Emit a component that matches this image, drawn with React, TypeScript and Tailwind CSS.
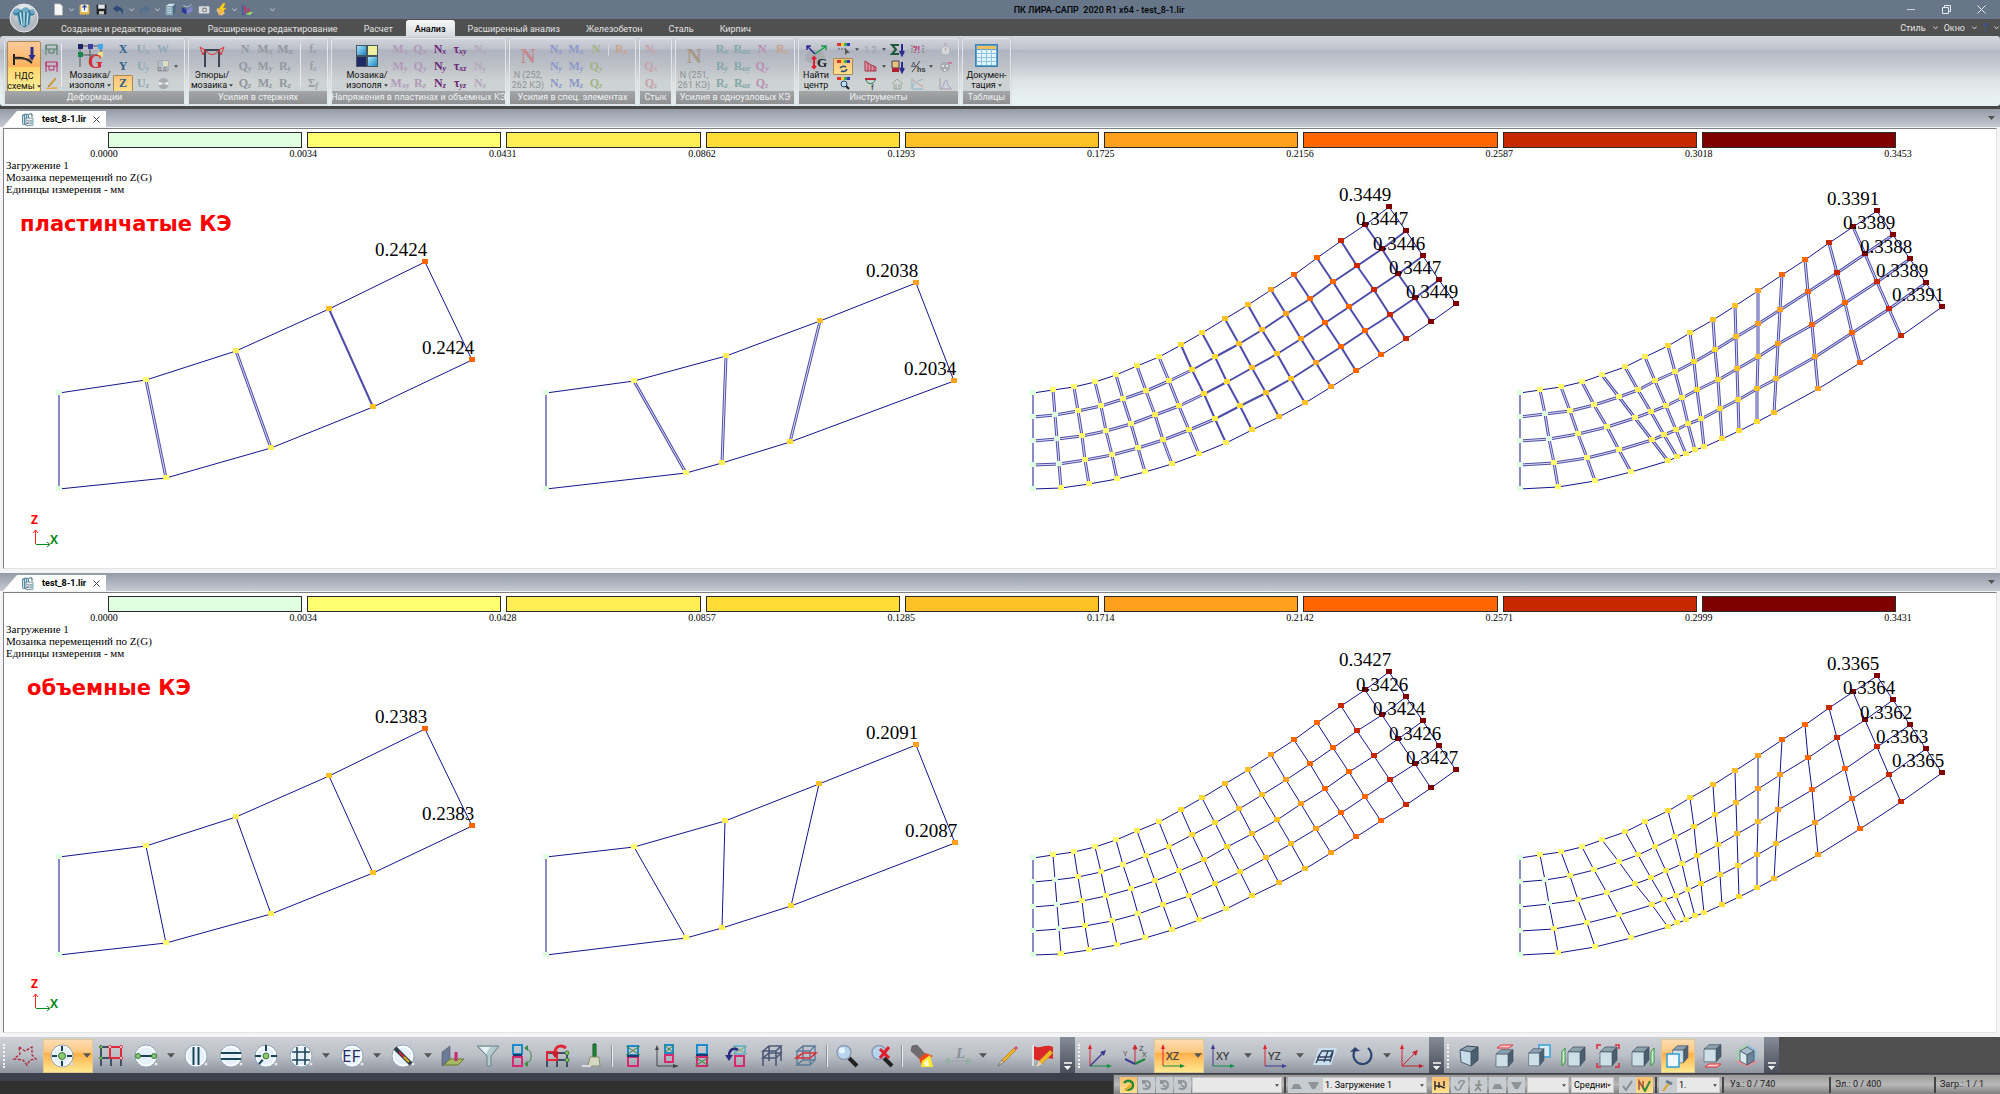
import type { ReactNode } from 'react';
import clsx from 'clsx';

const LEGEND = ['#e0ffe0', '#ffff70', '#ffee55', '#ffdc36', '#ffc028', '#ffa01e', '#ff6600', '#c82800', '#800000'];

type Point = [number, number];

interface MeshData {
	top: Point[];
	bottom: Point[];
	rows: number;
	labels: string[];
	// inner nodes that still belong to the first (almost zero) range
	still?: string[];
	// first column from which neighbouring elements close up
	closed?: number;
}

interface ViewData {
	title: string;
	titleClass: string;
	scale: string[];
	double: boolean;
	meshes: MeshData[];
}

const FINE_TOP: Point[] = [
	[1033, 393], [1053, 390], [1074, 387], [1095, 382], [1116, 375], [1137, 366], [1159, 357], [1181, 345], [1202, 333],
	[1225, 319], [1248, 305], [1271, 290], [1294, 275], [1317, 258], [1341, 241], [1365, 225], [1389, 207],
];
const FINE_BOTTOM: Point[] = [
	[1033, 489], [1061, 488], [1089, 484], [1117, 479], [1145, 472], [1172, 464], [1199, 454], [1226, 443], [1252, 430],
	[1279, 417], [1305, 403], [1331, 387], [1356, 371], [1381, 355], [1406, 339], [1431, 322], [1456, 304],
];
const SKEW_TOP: Point[] = [
	[1520, 393], [1540, 390], [1561, 387], [1582, 382], [1602, 375], [1625, 367], [1645, 357], [1668, 346], [1690, 333],
	[1713, 320], [1735, 306], [1758, 291], [1782, 275], [1805, 260], [1829, 243], [1853, 227], [1877, 211],
];
const SKEW_BOTTOM: Point[] = [
	[1520, 489], [1558, 487], [1595, 481], [1631, 472], [1668, 461], [1677, 457], [1686, 454], [1695, 450], [1704, 447],
	[1722, 439], [1739, 431], [1757, 422], [1774, 413], [1818, 389], [1860, 363], [1901, 336], [1942, 307],
];

const shift = (points: Point[], dy: number): Point[] => points.map(([x, y]) => [x, y + dy]);

const VIEWS: ViewData[] = [
	{
		title: 'пластинчатые КЭ',
		titleClass: 'left-[16px]',
		scale: ['0.0000', '0.0034', '0.0431', '0.0862', '0.1293', '0.1725', '0.2156', '0.2587', '0.3018', '0.3453'],
		double: true,
		meshes: [
			{
				top: [[59, 393], [146, 380], [236, 351], [329, 309], [425, 262]],
				bottom: [[59, 489], [166, 478], [271, 448], [373, 407], [472, 360]],
				rows: 1,
				labels: ['0.2424', '0.2424'],
				closed: 3,
			},
			{
				top: [[546, 393], [634, 381], [726, 356], [820, 321], [916, 283]],
				bottom: [[546, 489], [686, 473], [722, 463], [790, 442], [954, 381]],
				rows: 1,
				labels: ['0.2038', '0.2034'],
			},
			{
				top: FINE_TOP,
				bottom: FINE_BOTTOM,
				rows: 4,
				labels: ['0.3449', '0.3447', '0.3446', '0.3447', '0.3449'],
				still: ['1-1', '1-2', '1-3'],
				closed: 7,
			},
			{
				top: SKEW_TOP,
				bottom: SKEW_BOTTOM,
				rows: 4,
				labels: ['0.3391', '0.3389', '0.3388', '0.3389', '0.3391'],
				still: ['1-1', '1-2'],
			},
		],
	},
	{
		title: 'объемные КЭ',
		titleClass: 'left-[23px]',
		scale: ['0.0000', '0.0034', '0.0428', '0.0857', '0.1285', '0.1714', '0.2142', '0.2571', '0.2999', '0.3431'],
		double: false,
		meshes: [
			{
				top: [[59, 393], [146, 382], [236, 353], [329, 312], [425, 265]],
				bottom: [[59, 491], [166, 479], [271, 450], [373, 409], [472, 362]],
				rows: 1,
				labels: ['0.2383', '0.2383'],
			},
			{
				top: [[546, 393], [634, 383], [725, 357], [819, 320], [916, 281]],
				bottom: [[546, 491], [686, 474], [722, 464], [791, 442], [955, 379]],
				rows: 1,
				labels: ['0.2091', '0.2087'],
			},
			{
				top: shift(FINE_TOP, 1),
				bottom: shift(FINE_BOTTOM, 2),
				rows: 4,
				labels: ['0.3427', '0.3426', '0.3424', '0.3426', '0.3427'],
				still: ['1-1', '1-2', '1-3'],
			},
			{
				top: shift(SKEW_TOP, 1),
				bottom: shift(SKEW_BOTTOM, 2),
				rows: 4,
				labels: ['0.3365', '0.3364', '0.3362', '0.3363', '0.3365'],
				still: ['1-1', '1-2'],
			},
		],
	},
];

// node coordinates are counted from the window edge, the drawing area starts lower
const ORIGIN_Y = 129;
const PX_PER_MM = 537;

function nodeAt(mesh: MeshData, col: number, row: number): Point {
	const [x1, y1] = mesh.top[col];
	const [x2, y2] = mesh.bottom[col];
	const t = row / mesh.rows;
	return [Math.round(x1 + (x2 - x1) * t), Math.round(y1 + (y2 - y1) * t) - ORIGIN_Y];
}

function nodeColor(mesh: MeshData, col: number, row: number, scale: string[]) {
	if (col === 0 || mesh.still?.includes(`${col}-${row}`)) return LEGEND[0];
	const value = ((nodeAt(mesh, 0, row)[1] - nodeAt(mesh, col, row)[1]) / PX_PER_MM);
	let i = 1;
	while (i < 8 && value >= Number(scale[i + 1])) i++;
	return LEGEND[i];
}

function Mesh({ mesh, double, scale }: { mesh: MeshData; double: boolean; scale: string[] }) {
	const cols = mesh.top.length - 1;
	const lines: ReactNode[] = [];
	const nodes: ReactNode[] = [];
	const addLine = (a: Point, b: Point, inner: boolean, closed: boolean, key: string) => {
		const pos = { x1: a[0], y1: a[1], x2: b[0], y2: b[1] };
		if (inner && double) {
			lines.push(<line key={key} {...pos} stroke={closed ? '#4c4ca8' : '#5050aa'} strokeWidth={closed ? 2 : 3} />);
			if (!closed) lines.push(<line key={`${key}i`} {...pos} stroke="#dcdcf2" strokeWidth={1} />);
		} else {
			lines.push(<line key={key} {...pos} stroke="#14148e" strokeWidth={1} />);
		}
	};
	for (let c = 0; c <= cols; c++) {
		for (let r = 0; r <= mesh.rows; r++) {
			const p = nodeAt(mesh, c, r);
			const closed = mesh.closed !== undefined && c >= mesh.closed;
			if (c < cols) addLine(p, nodeAt(mesh, c + 1, r), r > 0 && r < mesh.rows, closed, `h${c}-${r}`);
			if (r < mesh.rows) addLine(p, nodeAt(mesh, c, r + 1), c > 0 && c < cols, closed, `v${c}-${r}`);
			nodes.push(<rect key={`n${c}-${r}`} x={p[0] - 3} y={p[1] - 3} width={6} height={5} fill={nodeColor(mesh, c, r, scale)} />);
		}
	}
	return (
		<g>
			<g>{lines}</g>
			<g>{nodes}</g>
			{mesh.labels.map((label, r) => {
				const [x, y] = nodeAt(mesh, cols, r);
				return (
					<text key={r} x={x - 50} y={y - 6} fontSize={19} fill="#000" fontFamily="Liberation Serif, serif">
						{label}
					</text>
				);
			})}
		</g>
	);
}

function FileIcon() {
	return (
		<svg className="w-[13px] h-[13px] shrink-0" viewBox="0 0 13 13">
			<path d="M1 2l3-1.500 4 0.500v11H2L1 10z" fill="#5f8ea3" />
			<path d="M2.500 3v8M4.500 2v9M6.500 2v3" stroke="#d6e8ef" strokeWidth="0.900" />
			<rect x="5" y="5" width="7" height="7.500" fill="#e4eef2" stroke="#3c6578" strokeWidth="0.600" />
			<text x="5.600" y="11" fontSize="5" fill="#2a4b5c" fontFamily="Noto Sans, sans-serif">20</text>
			<path d="M8 1h3v3" stroke="#3c6578" fill="none" />
		</svg>
	);
}

function Caret({ className = 'w-[7px] h-[4px] text-[#555]' }: { className?: string }) {
	return (
		<svg className={clsx('shrink-0', className)} viewBox="0 0 7 4">
			<path d="M0 0h7L3.500 4z" fill="currentColor" />
		</svg>
	);
}

const SMALL_CARET = 'w-[4px] h-[3px] text-[#444]';

function Chevron() {
	return (
		<svg className="w-[5px] h-[4px] shrink-0" viewBox="0 0 5 4">
			<path d="M0.500 0.500L2.500 3l2-2.500" stroke="#c8ccd2" fill="none" />
		</svg>
	);
}

function Viewport({ view }: { view: ViewData }) {
	return (
		<section className="flex-1 min-h-0 flex flex-col bg-[#f4f4f6]">
			<div className="h-[18px] shrink-0 flex items-end justify-between bg-linear-to-b from-[#949ca8] to-[#c6cad2]">
				<div className="h-4 flex items-center ml-[3px] w-[103px] pl-[18px] bg-white [clip-path:polygon(14px_0,100%_0,100%_100%,0_100%)]">
					<FileIcon />
					<span className="ml-[8px] w-[51px] text-[9px] leading-4 font-bold text-black whitespace-nowrap">test_8-1.lir</span>
					<button type="button" aria-label="Закрыть" className="text-[#444]">
						<svg className="w-[7px] h-[7px]" viewBox="0 0 7 7">
							<path d="M0.500 0.500l6 6M6.500 0.500l-6 6" stroke="currentColor" />
						</svg>
					</button>
				</div>
				<button type="button" aria-label="Список окон" className="h-[18px] px-[5px] flex items-center">
					<Caret />
				</button>
			</div>
			<div className="relative flex-1 min-h-0 mt-px ml-[3px] mr-[3px] mb-[4px] border-t border-l border-[#808080] border-r border-b border-r-[#e4e4e4] border-b-[#e4e4e4] bg-white overflow-hidden font-['Liberation_Serif',serif] text-black">
				<div className="flex gap-[5px] ml-[104px] mr-[100px] mt-[3px]">
					{LEGEND.map((color) => (
						<div key={color} className="flex-1 h-4 border border-[#2a2a2a]" style={{ backgroundColor: color }} />
					))}
				</div>
				<div className="flex justify-between ml-[100px] mr-[98px] h-3 text-[10px] leading-3">
					{view.scale.map((value) => (
						<span key={value} className="w-0 flex justify-center">{value}</span>
					))}
				</div>
				<div className="ml-[2px] -mt-px text-[11px] leading-3">
					<p>Загружение 1</p>
					<p>Мозаика перемещений по Z(G)</p>
					<p>Единицы измерения - мм</p>
				</div>
				<svg className="absolute -left-1 top-0 w-[2000px] h-full" aria-label="Деформированная схема">
					{view.meshes.map((mesh, i) => (
						<Mesh key={i} mesh={mesh} double={view.double} scale={view.scale} />
					))}
					<g fontFamily="Open Sans, sans-serif" fontSize="12" fontWeight="700">
						<text x="31" y="395" fill="#f00">Z</text>
						<text x="50" y="415" fill="#0a8a1a">X</text>
					</g>
					<path d="M35.500 415v-14M33 404l2.500-3 2.500 3" stroke="#f22" fill="none" />
					<path d="M36 415.500h14M47 413l3 2.500-3 2.500" stroke="#0a8a1a" fill="none" />
				</svg>
				<h2 className={clsx("absolute top-[83px] font-['DejaVu_Sans',sans-serif] font-bold text-[21px] leading-6 text-[#f00]", view.titleClass)}>
					{view.title}
				</h2>
			</div>
		</section>
	);
}

/* ---------- ribbon ---------- */

// "Nx" means the letter N with index x
function Letters({ items, color }: { items: string[]; color: string }) {
	return (
		<div className={clsx('flex flex-col w-5 shrink-0', color)}>
			{items.map((item, i) => (
				<button key={i} type="button" className="h-[17px] flex items-center justify-center font-['Liberation_Serif',serif] font-bold text-[12px] leading-[17px]">
					{item[0]}
					{item.length > 1 && <i className="text-[8px] leading-[12px] pt-[5px]">{item.slice(1)}</i>}
				</button>
			))}
		</div>
	);
}

function Group({ title, width, children }: { title: string; width: string; children: ReactNode }) {
	return (
		<div className={clsx('h-[67px] shrink-0 flex flex-col rounded-[2px] border border-[#e4e7ea] shadow-[0_0_1px_#888]', width)}>
			<div className="flex-1 min-h-0 flex pt-[2px] bg-linear-to-b from-black/0 to-black/10">{children}</div>
			<div className="h-[13px] bg-linear-to-b from-[#a4a6a8] to-[#8e9092] text-[#f0f2f4] text-[9px] leading-[13px] flex justify-center whitespace-nowrap">
				{title}
			</div>
		</div>
	);
}

function BigButton({ icon, lines, className, arrow = true }: { icon: ReactNode; lines: string[]; className: string; arrow?: boolean }) {
	return (
		<button type="button" className={clsx('h-[51px] shrink-0 flex flex-col items-center text-[9px] leading-[10px] whitespace-nowrap', className)}>
			<span className="h-[29px] flex items-center">{icon}</span>
			<span>{lines[0]}</span>
			<span className="flex items-center gap-[2px]">
				{lines[1]}
				{arrow && <Caret className={SMALL_CARET} />}
			</span>
		</button>
	);
}

function IconColumn({ children }: { children: ReactNode[] }) {
	return (
		<div className="flex flex-col shrink-0 w-5">
			{children.map((icon, i) => (
				<button key={i} type="button" className="h-[17px] flex items-center justify-center">
					{icon}
				</button>
			))}
		</div>
	);
}

function Small({ children, active = false }: { children: ReactNode; active?: boolean }) {
	return (
		<span className={clsx('flex items-center justify-center w-5 h-[17px]', active && 'bg-linear-to-b from-[#fbc27c] to-[#ffe08a] border border-[#a98a52] rounded-[1px]')}>
			<svg className="w-[13px] h-[13px] overflow-visible" viewBox="0 0 13 13" fill="none">
				{children}
			</svg>
		</span>
	);
}

function Divider() {
	return <div className="w-px h-[44px] mt-[2px] bg-[#c0c3c8] border-r border-[#e8eaee] shrink-0" />;
}

const rainbow = (
	<>
		<rect x="0" y="0" width="4" height="3" fill="#d33" />
		<rect x="4" y="0" width="3" height="3" fill="#fc3" />
		<rect x="7" y="0" width="3" height="3" fill="#3a5" />
		<rect x="10" y="0" width="3" height="3" fill="#33b" />
	</>
);

function Ribbon() {
	return (
		<div className="h-[70px] shrink-0 flex gap-[3px] pl-1 pt-[2px] rounded-[3px] bg-[linear-gradient(#d4d7de_0,#c0c4ce_19%,#b2b7c3_20%,#c6cad2_42%,#dfe4e4_64%,#e8f1f2_90%)]">
			<Group title="Деформации" width="w-[181px]">
				<BigButton
					className="w-[34px] ml-[2px] border border-[#a98a52] rounded-[2px] bg-[linear-gradient(#fbc99a_0,#fdb45c_50%,#ffd66c_52%,#fff09a_100%)]"
					lines={['НДС', 'схемы']}
					icon={
						<svg className="w-[26px] h-[24px]" viewBox="0 0 26 24" fill="none">
							<path d="M3 9v11" stroke="#222" strokeWidth="2" />
							<path d="M3 13c8-1 13 0 18 5" stroke="#222" strokeWidth="2" />
							<path d="M3 14h19" stroke="#444" strokeWidth="0.800" />
							<path d="M21 2v10" stroke="#2c2c90" strokeWidth="3" />
							<path d="M17.500 10h7L21 16z" fill="#2c2c90" />
						</svg>
					}
				/>
				<IconColumn>
					<Small><path d="M1 2h11v4H1zM1 2v10M12 2v10M4 6v4h5V6" stroke="#4f7f62" /></Small>
					<Small><path d="M1 2h11v4H1zM1 2v10M12 2v10M4 6v4h5V6" stroke="#c0286c" /></Small>
					<Small><path d="M10 1L4 8l-1 2 2-1 6-7z" fill="#f4b02c" stroke="#8a6a20" strokeWidth="0.500" /><path d="M1 11l11-1v2H1z" fill="#e8a84c" /></Small>
				</IconColumn>
				<Divider />
				<BigButton
					className="w-[46px] ml-[5px]"
					lines={['Мозаика/', 'изополя']}
					icon={
						<svg className="w-[27px] h-[26px] overflow-visible" viewBox="0 0 27 26" fill="none">
							<path d="M3 3h21v9H3zM13 3v9M3 12v12M13 12v10" stroke="#555" />
							<rect x="1" y="1" width="5" height="5" fill="#1f2468" />
							<rect x="11" y="1" width="5" height="5" fill="#3a3fa0" />
							<rect x="21" y="1" width="5" height="5" fill="#3fa8e8" />
							<rect x="1" y="9" width="5" height="5" fill="#1a8a4a" />
							<rect x="21" y="9" width="5" height="5" fill="#e8e48a" />
							<text x="11" y="25" fontSize="19" fontWeight="700" fill="#d82830" fontFamily="Liberation Serif, serif">G</text>
						</svg>
					}
				/>
				<div className="flex flex-col w-[20px] shrink-0 font-['Liberation_Serif',serif] font-bold text-[12px] leading-[17px] text-[#2f6288]">
					<button type="button" className="h-[17px]">X</button>
					<button type="button" className="h-[17px]">Y</button>
					<button type="button" className="h-[17px] leading-[15px] rounded-[1px] border border-[#a98a52] bg-linear-to-b from-[#fbc27c] to-[#ffe08a]">Z</button>
				</div>
				<Letters items={['Ux', 'Uy', 'Uz']} color="text-[#8fa9b8]" />
				<IconColumn>
					<span className="font-['Liberation_Serif',serif] font-bold text-[12px] leading-[17px] text-[#8fa9b8]">W</span>
					<Small><path d="M1 1h10v10H1z" stroke="#999" /><path d="M1 1h5v5H1z" fill="#aebbc8" /><path d="M6 1h5v5H6z" fill="#dcdcc0" /><text x="1" y="11" fontSize="6" fill="#667" fontFamily="Roboto, sans-serif">0.0</text></Small>
					<Small><circle cx="6.500" cy="6.500" r="5.500" fill="#a8acb0" /><path d="M6.500 6.500l5-2v4zM6.500 6.500l-5-2v4z" fill="#eee" /></Small>
				</IconColumn>
				<span className="pt-[24px] pl-px"><Caret className={SMALL_CARET} /></span>
			</Group>
			<Group title="Усилия в стержнях" width="w-[140px]">
				<BigButton
					className="w-[46px]"
					lines={['Эпюры/', 'мозаика']}
					icon={
						<svg className="w-[26px] h-[24px]" viewBox="0 0 26 24" fill="none">
							<path d="M6 23V6h14v17" stroke="#3c4652" strokeWidth="2" />
							<path d="M1 3l5 3c5 6 10 6 14 0l5-3-3 8-2-5M1 3l3 8 2-5" stroke="#e03030" />
						</svg>
					}
				/>
				<Letters items={['N', 'Qy', 'Qz']} color="text-[#9298a0]" />
				<Letters items={['Mx', 'My', 'Mz']} color="text-[#9298a0]" />
				<Letters items={['Mк', 'Ry', 'Rz']} color="text-[#9298a0]" />
				<span className="w-[5px]" />
				<Divider />
				<span className="w-[2px]" />
				<Letters items={['fy', 'fz', 'Σf']} color="text-[#9ca0a6]" />
			</Group>
			<Group title="Напряжения в пластинах и объемных КЭ" width="w-[175px]">
				<BigButton
					className="w-[56px] pl-[14px]"
					lines={['Мозаика/', 'изополя']}
					icon={
						<svg className="w-[22px] h-[22px]" viewBox="0 0 22 22">
							<defs>
								<linearGradient id="iso" x2="1" y2="1">
									<stop stopColor="#a8e4fa" />
									<stop offset="1" stopColor="#1c86c4" />
								</linearGradient>
							</defs>
							<rect width="22" height="22" fill="#46555e" />
							<rect x="1" y="1" width="9" height="9" fill="url(#iso)" />
							<rect x="12" y="1" width="9" height="9" fill="#f0f0a0" />
							<rect x="1" y="12" width="9" height="9" fill="#1e2a68" />
							<rect x="12" y="12" width="9" height="9" fill="url(#iso)" />
						</svg>
					}
				/>
				<span className="w-[2px]" />
				<Letters items={['Mx', 'My', 'Mxy']} color="text-[#b09ab8]" />
				<Letters items={['Qx', 'Qy', 'Rz']} color="text-[#b09ab8]" />
				<Letters items={['Nx', 'Ny', 'Nz']} color="text-[#6a2a78]" />
				<Letters items={['τxy', 'τxz', 'τyz']} color="text-[#6a2a78]" />
				<Letters items={['Nx', 'Ny', 'Nz']} color="text-[#b4a8bc]" />
			</Group>
			<Group title="Усилия в спец. элементах" width="w-[127px]">
				<div className="text-[#8e9296]"><BigButton className="w-[36px]" arrow={false} lines={['N (252,', '262 КЭ)']} icon={<b className="font-['Liberation_Serif',serif] text-[21px] text-[#c48a90]">N</b>} /></div>
				<Letters items={['Nx', 'Ny', 'Nz']} color="text-[#8c98c8]" />
				<Letters items={['Mx', 'My', 'Mz']} color="text-[#8c98c8]" />
				<Letters items={['N', 'Qy', 'Qz']} color="text-[#a0b484]" />
				<span className="w-[2px]" />
				<div className="w-px h-3 mt-[3px] bg-[#d8dade]" />
				<span className="w-[2px]" />
				<Letters items={['Rz']} color="text-[#c8a48c]" />
			</Group>
			<Group title="Стык" width="w-[33px]">
				<span className="w-px" />
				<Letters items={['Ny', 'Qx', 'Qz']} color="text-[#c4a4a8]" />
			</Group>
			<Group title="Усилия в одноузловых КЭ" width="w-[120px]">
				<div className="text-[#8e9296]"><BigButton className="w-[36px]" arrow={false} lines={['N (251,', '261 КЭ)']} icon={<b className="font-['Liberation_Serif',serif] text-[21px] text-[#a89888]">N</b>} /></div>
				<Letters items={['Rx', 'Ry', 'Rz']} color="text-[#84a8a8]" />
				<Letters items={['Rux', 'Ruy', 'Ruz']} color="text-[#84a8a8]" />
				<Letters items={['N', 'Qy', 'Qz']} color="text-[#b890b4]" />
				<Letters items={['Rz']} color="text-[#c8a48c]" />
			</Group>
			<Group title="Инструменты" width="w-[161px]">
				<BigButton
					className="w-[34px]"
					arrow={false}
					lines={['Найти', 'центр']}
					icon={
						<svg className="w-[24px] h-[26px] overflow-visible" viewBox="0 0 24 26" fill="none">
							<ellipse cx="11" cy="14" rx="10" ry="7" fill="#a8aeb4" />
							<path d="M11 11L3 3M3 7V3h4" stroke="#2c2c90" strokeWidth="1.500" />
							<path d="M11 11l10-7M17 3h5v4" stroke="#1a9a4a" strokeWidth="1.500" />
							<path d="M10 14v11M8 16l2-2 2 2M8 23l2 2 2-2" stroke="#e02030" strokeWidth="2" />
							<text x="13" y="24" fontSize="13" fontWeight="700" fill="#222" fontFamily="Liberation Serif, serif">G</text>
						</svg>
					}
				/>
				<IconColumn>
					<Small>{rainbow}<path d="M1 6h9" stroke="#555" strokeDasharray="2 1" /><path d="M8 5v7l2-2h3z" fill="#555" /></Small>
					<Small active>{rainbow}<path d="M3 8a4 3 0 0 1 6-1M10 9a4 3 0 0 1-6 2" stroke="#274b78" strokeWidth="1.500" /></Small>
					<Small>{rainbow}<circle cx="7" cy="7" r="3" fill="#bfe0f4" stroke="#246" /><path d="M9 9l3 3" stroke="#222" strokeWidth="2" /></Small>
				</IconColumn>
				<span className="w-[7px] pt-[7px] pl-[2px]"><Caret className={SMALL_CARET} /></span>
				<IconColumn>
					<Small><text x="0" y="10" fontSize="9" fill="#999ea6" fontFamily="Roboto, sans-serif">1.2</text></Small>
					<Small><path d="M1 1v10h11V7L7 5z" fill="#d89aa8" stroke="#b03048" /><path d="M4 3v8M7 5v6M10 6v5" stroke="#b03048" /></Small>
					<Small><path d="M1 1h11v2H1z" fill="#c02838" /><path d="M2 3c2 5 7 5 9 0" stroke="#1a7a4a" /><text x="7" y="13" fontSize="8" fill="#222">f</text></Small>
				</IconColumn>
				<span className="w-[7px] pt-[7px] pl-[2px] flex flex-col gap-[14px]"><Caret className={SMALL_CARET} /><Caret className={SMALL_CARET} /></span>
				<IconColumn>
					<Small><path d="M8 2H1l4 4.500L1 11h7" stroke="#1c5a38" strokeWidth="2" /><path d="M11 1v9M9 8l2 4 2-4" stroke="#2c2c90" strokeWidth="2" /></Small>
					<Small><path d="M1 1h7v7H1z" fill="#e8c080" stroke="#444" /><path d="M1 8h7v4H1z" fill="#b02030" /><path d="M11 2v8M9 8l2 4 2-4" stroke="#2c2c90" strokeWidth="2" /></Small>
					<Small><path d="M1 7l5-5 6 5M3 7v5h7V7M5 7v5M8 7v5" stroke="#9aa89a" /></Small>
				</IconColumn>
				<IconColumn>
					<Small><text x="2" y="10" fontSize="9" fontWeight="700" fill="#c03070" fontFamily="Roboto, sans-serif">?!</text><path d="M1 2v9M12 2v9" stroke="#777" strokeDasharray="2 1" /></Small>
					<Small><text x="0" y="7" fontSize="7" fill="#333">Δ</text><path d="M1 12L9 1" stroke="#444" /><text x="6" y="12" fontSize="8" fontWeight="700" fill="#444">hs</text></Small>
					<Small><path d="M1 1v11h11M1 11C4 4 8 4 12 2" stroke="#8ab4c4" /><path d="M2 3l10 7" stroke="#d09aa4" /></Small>
				</IconColumn>
				<span className="w-[8px] pt-[24px] pl-[2px]"><Caret className={SMALL_CARET} /></span>
				<IconColumn>
					<Small><circle cx="6.500" cy="7.500" r="4.500" fill="#d4d6d8" stroke="#aeb2b6" /><path d="M5 1h3M6.500 7.500V5" stroke="#c09aa0" /></Small>
					<Small><circle cx="6" cy="7" r="5" fill="#a8acb0" /><circle cx="4" cy="6" r="1" fill="#eee" /><circle cx="8" cy="6" r="1" fill="#eee" /><circle cx="6" cy="10" r="1" fill="#eee" /><path d="M9 3h4" stroke="#d07aa0" strokeWidth="2" /></Small>
					<Small><path d="M1 1v11h12" stroke="#b09ab0" /><path d="M2 11C5 11 5 3 7 3s1 8 5 8" stroke="#9aa4c8" /></Small>
				</IconColumn>
			</Group>
			<Group title="Таблицы" width="w-[49px]">
				<BigButton
					className="w-[47px]"
					lines={['Докумен-', 'тация']}
					icon={
						<svg className="w-[23px] h-[23px]" viewBox="0 0 23 23">
							<rect x="0.500" y="0.500" width="22" height="22" fill="#5ba0cc" stroke="#3d82b0" />
							<rect x="2" y="2" width="19" height="3" fill="#f0c060" />
							<rect x="2" y="6" width="19" height="15" fill="#e4f4fc" />
							<path d="M2 9.500h19M2 13.500h19M2 17.500h19M6.500 5v16M11.500 5v16M16.500 5v16" stroke="#8cc4e4" fill="none" />
						</svg>
					}
				/>
			</Group>
		</div>
	);
}

/* ---------- title bar and menu ---------- */

const QUICK: { name: string; icon: ReactNode; more?: boolean }[] = [
	{ name: 'Новый', more: true, icon: <path d="M3 1h7l3 3v11H3z" fill="#f6f6f6" stroke="#999" strokeWidth="0.500" /> },
	{ name: 'Открыть', icon: <><rect x="2" y="2" width="12" height="12" rx="1" fill="#e8b64c" /><rect x="4" y="2" width="8" height="9" fill="#f4f7fb" /><path d="M8 3v6M5.500 5.500L8 3l2.500 2.500" stroke="#2a4a90" strokeWidth="1.500" /></> },
	{ name: 'Сохранить', icon: <><path d="M2 2h12v12H2z" fill="#222" /><path d="M4 2h8v5H4z" fill="#e4e8ee" /><path d="M5 10h6v4H5z" fill="#ccc" /></> },
	{ name: 'Отменить', more: true, icon: <path d="M1 7l6-5v3c5 0 8 3 6 9-1-4-3-5-6-5v3z" fill="#2c4a78" /> },
	{ name: 'Повторить', more: true, icon: <path d="M15 7L9 2v3C4 5 1 8 3 14c1-4 3-5 6-5v3z" fill="#54708c" /> },
	{ name: 'Визуализация', icon: <><path d="M2 4l4-3h8l-3 3z" fill="#cfe0e8" /><path d="M2 4h9v11H2z" fill="#88a8b8" /><path d="M11 4l3-3v11l-3 3z" fill="#4a6a80" /><path d="M4 6h5M4 9h5M4 12h5" stroke="#d8e8f0" /></> },
	{ name: 'Книга отчетов', icon: <><path d="M1 5l6 3v6l-6-3z" fill="#2c3c90" /><path d="M7 8l7-4v6l-7 4z" fill="#7c84cc" /><path d="M3 3l5 2 5-3" stroke="#c8d0f0" /></> },
	{ name: 'Снимок', icon: <><rect x="1" y="4" width="13" height="9" rx="1" fill="#d8dadc" /><circle cx="8" cy="8.500" r="3" fill="#777" /><circle cx="8" cy="8.500" r="1.500" fill="#eee" /></> },
	{ name: 'Расчет', more: true, icon: <><path d="M3 6l7 2 2 5-3 2H5L2 9z" fill="#f0c080" /><path d="M10 0L4 8h4l-3 7 9-9h-4l3-6z" fill="#ffd21c" stroke="#c88a10" strokeWidth="0.500" /></> },
	{ name: 'Эпюры', icon: <><path d="M2 2v12h13" stroke="#4c5c9c" strokeWidth="2" /><path d="M5 4v8M9 6v6" stroke="#c83060" strokeWidth="2" /><path d="M5 14l5-3h5l-3 4z" fill="#9ac860" /></> },
];

function TitleBar() {
	return (
		<header className="h-[19px] shrink-0 bg-[#677689] flex items-center pl-[50px] pr-[12px]">
			<div className="flex items-center flex-1">
				{QUICK.map((item) => (
					<div key={item.name} className="flex items-center">
						<button type="button" aria-label={item.name} className="w-[17px] flex justify-center">
							<svg className="w-[13px] h-[13px]" viewBox="0 0 16 16" fill="none">{item.icon}</svg>
						</button>
						{item.more && <span className="w-[9px] flex justify-center"><Chevron /></span>}
					</div>
				))}
				<span className="ml-[14px]"><Chevron /></span>
			</div>
			<h1 className="text-[9px] leading-[18px] text-black font-medium whitespace-pre pl-[160px]">ПК ЛИРА-САПР  2020 R1 x64 - test_8-1.lir</h1>
			<div className="flex-1 flex justify-end gap-[21px]">
				<button type="button" aria-label="Свернуть" className="w-[14px] h-[14px] flex items-center justify-center">
					<span className="w-2 h-px bg-[#cdd3da]" />
				</button>
				<button type="button" aria-label="Восстановить" className="w-[14px] h-[14px] flex items-center justify-center">
					<svg className="w-[9px] h-[9px]" viewBox="0 0 9 9" fill="none" stroke="#e6e9ed"><path d="M0.500 2.500h6v6h-6zM2.500 2V0.500h6v6H7" /></svg>
				</button>
				<button type="button" aria-label="Закрыть" className="w-[14px] h-[14px] flex items-center justify-center">
					<svg className="w-[9px] h-[9px]" viewBox="0 0 9 9" fill="none" stroke="#e6e9ed"><path d="M0.500 0.500l8 8M8.500 0.500l-8 8" /></svg>
				</button>
			</div>
		</header>
	);
}

const TABS = ['Создание и редактирование', 'Расширенное редактирование', 'Расчет', 'Анализ', 'Расширенный анализ', 'Железобетон', 'Сталь', 'Кирпич'];

function MenuBar() {
	return (
		<nav className="h-[17px] shrink-0 bg-[#505050] flex items-end pl-[48px] pr-px text-[#e2e2e2] text-[9px] leading-[18px]">
			{TABS.map((tab) => (
				<button
					key={tab}
					type="button"
					className={clsx(
						'h-4 whitespace-nowrap',
						tab === 'Анализ' ? 'px-[9px] rounded-t-[3px] bg-linear-to-b from-[#f6f7f9] to-[#d6dae0] text-black font-medium' : 'px-[13px]'
					)}
				>
					{tab}
				</button>
			))}
			<div className="ml-auto h-[17px] flex items-center gap-[6px]">
				<button type="button" className="flex items-center gap-[7px]">Стиль <Chevron /></button>
				<button type="button" className="flex items-center gap-[7px]">Окно <Chevron /></button>
				<button type="button" className="flex items-center gap-[5px]">
					<b className="text-[12px] text-[#3c5488]">?</b> <Chevron />
				</button>
			</div>
		</nav>
	);
}

function Orb() {
	return (
		<button type="button" aria-label="Меню приложения" className="absolute left-[9px] top-[3px]">
			<svg className="w-[30px] h-[30px]" viewBox="0 0 30 30" fill="none">
				<defs>
					<radialGradient id="orb" cy="0.250">
						<stop stopColor="#fff" />
						<stop offset="1" stopColor="#b4b9c0" />
					</radialGradient>
				</defs>
				<circle cx="15" cy="15" r="14" fill="url(#orb)" stroke="#e4e8ec" />
				<path d="M4 8c3-4 6-3 8-1 3-4 7-3 9 0 3-2 5 0 5 3-1 3-3 3-4 3l-1 8-5 4-6-4-2-8c-3 0-5-2-4-5z" fill="#6fa8c2" />
				<path d="M9 9l3 13M13 8l2 16M17 9l-1 15M21 9l-2 13M5 10c3 3 6-1 7-3M25 11c-3 2-5-1-5-4" stroke="#2f7490" strokeWidth="1.300" />
				<path d="M11 9l2 13M15 9v14M19 10l-1 12" stroke="#d4ecf4" />
			</svg>
		</button>
	);
}

/* ---------- bottom toolbars ---------- */

interface Tool {
	name: string;
	icon?: ReactNode;
	more?: boolean;
	active?: boolean;
	sep?: boolean;
}

const lens = (
	<>
		<circle cx="12" cy="12" r="11" fill="#e6f0f8" stroke="#8fa4b8" />
		<circle cx="12" cy="12" r="9.500" stroke="#fff" strokeWidth="1.500" />
		<circle cx="22" cy="20" r="1.500" fill="#f4f4f4" stroke="#aaa" strokeWidth="0.500" />
	</>
);
const GreenDot = ({ x, y, r = 2 }: { x: number; y: number; r?: number }) => <circle cx={x} cy={y} r={r} fill="#8cc870" stroke="#3c7838" />;

const frame = (y: number, h: number, color: string) => <rect x="7" y={y} width="10" height={h} stroke={color} strokeWidth="2" />;
const crossed = (y: number, color: string) => (
	<>
		{frame(y, 9, color)}
		<path d={`M5 ${y}l14 9M19 ${y}L5 ${y + 9}`} stroke="#3a8a3a" />
	</>
);

const TOOLS_SELECT: Tool[] = [
	{ name: 'Полигон', icon: <path d="M6 3l6 4 7-4v8l4 4-6 1-3 5-4-5-9-1 6-5z" stroke="#b02838" strokeWidth="1.300" strokeDasharray="3 1.500" /> },
	{ name: 'Отметка узлов', more: true, active: true, icon: <>{lens}<path d="M12 2v20M2 12h20" stroke="#1c4458" strokeWidth="2" /><circle cx="12" cy="12" r="5" fill="#f4f8fc" /><GreenDot x={12} y={12} r={3.5} /></> },
	{ name: 'Отметка блоков', icon: <><path d="M2 2v20M2 3h9M2 14h20M12 14v8M22 14v8" stroke="#3c5068" strokeWidth="2" /><path d="M11 3h11v11H11z" stroke="#e02838" strokeWidth="2" /><GreenDot x={2} y={3} r={1.5} /><GreenDot x={2} y={14} r={1.5} /><circle cx="11" cy="3" r="1.500" fill="#fff" stroke="#e02838" /><circle cx="22" cy="3" r="1.500" fill="#fff" stroke="#e02838" /><circle cx="22" cy="14" r="1.500" fill="#fff" stroke="#e02838" /></> },
	{ name: 'Отметка элементов', more: true, icon: <>{lens}<path d="M4 12h16" stroke="#1c4458" strokeWidth="2" /><GreenDot x={4} y={12} r={2.5} /><GreenDot x={20} y={12} r={2.5} /></> },
	{ name: 'Вертикальные', icon: <>{lens}<path d="M9.500 3v18M14.500 3v18" stroke="#1c4458" strokeWidth="2" /></> },
	{ name: 'Горизонтальные', icon: <>{lens}<path d="M2 9h20M2 15h20" stroke="#1c4458" strokeWidth="2" /></> },
	{ name: 'Узел', icon: <>{lens}<path d="M12 1v11M1 12h22M12 12l-7 8" stroke="#1c4458" strokeWidth="2" /><circle cx="12" cy="12" r="5" fill="#f4f8fc" /><GreenDot x={12} y={12} r={3} /></> },
	{ name: 'Сетка', more: true, icon: <>{lens}<path d="M8 3v18M16 3v18M3 8h18M3 16h18" stroke="#1c4458" strokeWidth="1.600" /></> },
	{ name: 'Жесткость', more: true, icon: <>{lens}<text x="2" y="18" fontSize="17" fill="#28285c" fontFamily="Open Sans, sans-serif">EF</text></> },
	{ name: 'Фильтр цвета', more: true, icon: <>{lens}<path d="M4 4l16 16" stroke="#2c3c48" strokeWidth="4" /><path d="M12 12l6 6" stroke="#d8b020" strokeWidth="2" /><path d="M8 8l5 5" stroke="#c82838" strokeWidth="2" /></> },
	{ name: 'Профиль', icon: <><path d="M1 8l8-6v14l-8 6z" fill="#6c7c98" stroke="#445" strokeWidth="0.500" /><path d="M3 21h14l6-6H9z" fill="#a8b860" stroke="#687830" /><path d="M15 8v9" stroke="#c8286c" strokeWidth="3" /></> },
	{ name: 'Фильтр', icon: <><path d="M1 2h22l-8 10v10h-4V12z" fill="#b4ccd0" stroke="#6c8088" /><path d="M4 3h10l-4 7z" fill="#e8f4f4" /></> },
	{ name: 'Инверсия', icon: <><path d="M3 1h9v9H3z" stroke="#1c8ccc" strokeWidth="2" /><path d="M3 11h9" stroke="#1c3c70" strokeWidth="2" /><path d="M3 13h9v9H3z" stroke="#d82870" strokeWidth="2" /><path d="M16 4c7 3 7 13 0 16" stroke="#3a8a4a" /><path d="M14 4l4-3v6zM14 20l4-3v6z" fill="#3a8a4a" /></> },
	{ name: 'Отмена отметки', icon: <><path d="M2 9h20v7H2zM2 16v7M12 9v14M22 16v7" stroke="#3c5068" strokeWidth="2" /><path d="M2 8h10v8H2z" stroke="#e02838" strokeWidth="2" /><path d="M21 4c-5-4-11-2-11 5" stroke="#e02838" strokeWidth="3" /><path d="M6 8h9l-5 6z" fill="#c02030" /><GreenDot x={22} y={9} r={2} /><GreenDot x={22} y={16} r={2} /></> },
	{ name: 'Очистить', icon: <><path d="M13 0h3v13h-3z" fill="#1f8a38" stroke="#0f5a20" /><path d="M10 13h9l1 9H8z" fill="#d4d8c0" stroke="#889070" /><path d="M2 22h9" stroke="#ddd" strokeWidth="2" /></> },
	{ name: 's1', sep: true },
	{ name: 'Фрагмент', icon: <>{crossed(2, '#1c8ccc')}{frame(13, 9, '#d82870')}<path d="M6 12h12" stroke="#1c3c70" strokeWidth="2" /></> },
	{ name: 'Фрагмент по осям', icon: <><path d="M2 22V4M2 22h17" stroke="#444" /><path d="M0 6l2-5 2 5zM18 20l6 2-6 2z" fill="#444" /><path d="M10 1h8v8h-8z" stroke="#1c8ccc" strokeWidth="2" /><path d="M9 1l10 8M19 1L9 9" stroke="#3a8a3a" /><path d="M10 11h8v7h-8z" stroke="#d82870" strokeWidth="2" /></> },
	{ name: 'Нижний фрагмент', icon: <>{frame(1, 9, '#1c8ccc')}{crossed(13, '#d82870')}<path d="M6 11h12" stroke="#1c3c70" strokeWidth="2" /></> },
	{ name: 'Восстановить', icon: <><path d="M10 2h10v8H10z" stroke="#70b8d0" strokeWidth="2" /><path d="M8 2l14 8M22 2L8 10" stroke="#78a878" /><path d="M10 12h9v10h-9z" stroke="#d82870" strokeWidth="2" /><path d="M13 6C8 3 4 6 4 12" stroke="#2c2c80" strokeWidth="2.500" /><path d="M0 11h8l-4 6z" fill="#2c2c80" /></> },
	{ name: 'Каркас', icon: <path d="M3 7l6-5h12l-5 5zM3 7v15M16 7v15M21 2v15M9 2v15M3 14h13l5-5H9z" stroke="#4c5a78" strokeWidth="1.600" /> },
	{ name: 'Перекрытие', icon: <><path d="M3 7l6-5h12l-5 5zM3 21h13l5-5H9zM3 7v14M16 7v14M21 2v14M9 2v14" stroke="#5c7c98" strokeWidth="1.400" /><path d="M2 14h14l6-5H9z" stroke="#d83038" strokeWidth="1.600" /></> },
	{ name: 's2', sep: true },
	{ name: 'Масштаб', icon: <><path d="M14 14l8 8" stroke="#222" strokeWidth="4" /><circle cx="9" cy="8.500" r="7" fill="#b8d4ee" stroke="#8c9cb0" strokeWidth="1.500" /><circle cx="7" cy="6.500" r="3" fill="#e8f4fc" /></> },
	{ name: 'Сброс масштаба', icon: <><path d="M14 14l8 8" stroke="#222" strokeWidth="4" /><circle cx="9" cy="8.500" r="7" fill="#b8d4ee" stroke="#8c9cb0" strokeWidth="1.500" /><path d="M10 5l9 9M19 3l-9 11" stroke="#e01c28" strokeWidth="3" /></> },
	{ name: 's3', sep: true },
	{ name: 'Подсветка', icon: <><path d="M2 2l5-1 9 10-5 5L1 7z" fill="#706c70" stroke="#444" strokeWidth="0.500" /><path d="M9 14l7-5 7 3-12 8z" fill="#e84c20" /><path d="M12 17l8-6 3 12H11z" fill="#ffe930" /><path d="M14 19l4-4 1 7h-4z" fill="#fffdd0" /></> },
	{ name: 'Длина', more: true, icon: <><text x="10" y="14" fontSize="15" fontStyle="italic" fontWeight="700" fill="#8a9098" fontFamily="Liberation Serif, serif">L</text><path d="M3 17h19" stroke="#8a9098" strokeDasharray="1 2" /><circle cx="2" cy="17" r="2" stroke="#84b090" /><circle cx="22" cy="17" r="2" stroke="#84b090" /></> },
	{ name: 'Карандаш', icon: <><path d="M6 16L18 4l2 2L8 18z" fill="#f4b428" stroke="#a87418" strokeWidth="0.700" /><path d="M18 4l2-2 2 2-2 2z" fill="#d84868" /><path d="M6 16l-4 6 6-4z" fill="#f0dcb0" stroke="#444" strokeWidth="0.500" /></> },
	{ name: 'Флаг', icon: <><path d="M2 1v21" stroke="#eee" strokeWidth="1.500" /><path d="M3 2c6 4 11-3 19 1v12c-8-3-12 4-19 0z" fill="#dc2828" /><path d="M8 17L19 6l3 3-11 11z" fill="#f4b428" stroke="#a87418" strokeWidth="0.500" /><path d="M8 17l-3 6 6-3z" fill="#f0dcb0" /></> },
];

function axes(label: string, up: string, right: string) {
	return (
		<>
			<path d="M2 22V4" stroke={up} />
			<path d="M0 5h4L2 0z" fill={up} />
			<path d="M2 22h18" stroke={right} />
			<path d="M19 20v4l5-2z" fill={right} />
			{label && <text x="5" y="16" fontSize="11" fontWeight="600" fill="#444" fontFamily="Open Sans, sans-serif">{label}</text>}
		</>
	);
}

const TOOLS_AXES: Tool[] = [
	{ name: 'Изометрия', icon: <>{axes('', '#e02030', '#109040')}<path d="M2 22L15 9" stroke="#3c3c90" strokeWidth="1.500" /><path d="M12 8l6-2-2 6z" fill="#3c3c90" /></> },
	{ name: 'Диметрия', icon: <><path d="M12 20V4M10 5l2-4 2 4z" stroke="#c82838" fill="#c82838" /><path d="M12 20l10-5" stroke="#1a8a3a" strokeWidth="2" /><path d="M12 20L2 15" stroke="#3c3c90" strokeWidth="2" /><g fontSize="8" fill="#444" fontFamily="Open Sans, sans-serif"><text x="16" y="7">Z</text><text x="0" y="12">Y</text><text x="19" y="13">X</text></g></> },
	{ name: 'Проекция XZ', more: true, active: true, icon: axes('XZ', '#e02030', '#109040') },
	{ name: 'Проекция XY', more: true, icon: axes('XY', '#3c3c90', '#109040') },
	{ name: 'Проекция YZ', more: true, icon: axes('YZ', '#e02030', '#3c3c90') },
	{ name: 'Плоскость', icon: <><path d="M6 4h18l-6 17H0z" fill="#c8e0f0" /><path d="M5 13h12l3-6H9zM3 19l4-9M11 18l4-11M17 18l3-10M4 16h13" stroke="#34405c" strokeWidth="1.300" /></> },
	{ name: 'Поворот', more: true, icon: <><path d="M18 4a9 9 0 1 1-13 2" stroke="#2c4470" strokeWidth="2.200" /><path d="M0 8l5-5 5 4z" fill="#2c4470" /></> },
	{ name: 'Локальные оси', icon: <>{axes('', '#e02030', '#c02028')}<path d="M2 22L15 9" stroke="#c82838" /><path d="M12 8l6-2-2 6z" fill="#c82838" /></> },
];

const cube = (
	<>
		<path d="M4 8l5-5h12l-5 5z" fill="#8ca0b0" stroke="#3c4c5c" strokeWidth="0.700" />
		<path d="M16 8l5-5v13l-5 6z" fill="#4c5f70" stroke="#3c4c5c" strokeWidth="0.700" />
		<path d="M4 8h12v14H4z" fill="#cfdfe8" stroke="#4c5c6c" strokeWidth="0.700" />
	</>
);

const TOOLS_VIEW: Tool[] = [
	{ name: 'Объемный вид', icon: <><path d="M3 6l7-4 11 1-7 5z" fill="#8ca0b0" stroke="#3c4c5c" /><path d="M14 8l7-5v13l-7 6z" fill="#4c5f70" stroke="#3c4c5c" /><path d="M3 6l11 2v14L4 18z" fill="#c4dce8" stroke="#4c5c6c" /></> },
	{ name: 'Сверху', icon: <><g transform="translate(0 3) scale(1 .9)">{cube}</g><path d="M5 4l4-3h12l-4 3z" fill="#f8d0d0" stroke="#e03038" /></> },
	{ name: 'Сзади', icon: <><path d="M12 1h11v12H12z" fill="#d8ecf8" stroke="#3ca0d8" strokeWidth="1.500" /><g transform="translate(-2 2) scale(.9)">{cube}</g></> },
	{ name: 'Слева', icon: <><g transform="translate(3 0)">{cube}</g><path d="M1 8l3-4v14l-3 4z" fill="#d8f0d8" stroke="#30983c" /></> },
	{ name: 'Все', icon: <>{cube}<path d="M1 5V1h4M19 1h4v4M1 19v4h4M23 19v4h-4" stroke="#e02838" strokeWidth="1.500" /></> },
	{ name: 'Справа', icon: <><g transform="translate(-3 0)">{cube}</g><path d="M20 8l3-4v14l-3 4z" fill="#d8f0d8" stroke="#30983c" /></> },
	{ name: 'Спереди', active: true, icon: <><g transform="translate(3 -1) scale(.9)">{cube}</g><path d="M1 10h12v13H1z" fill="#f0f8fc" stroke="#2ca0d8" strokeWidth="1.500" /></> },
	{ name: 'Снизу', icon: <><g transform="translate(0 -2) scale(1 .9)">{cube}</g><path d="M5 23l4-3h12l-4 3z" fill="#f8d0d0" stroke="#e03038" /></> },
	{ name: 'Вид 3D', icon: <><path d="M12 0L2 6v11l10-5z" fill="#a8d0b0" /><path d="M12 0l10 6v11l-10-5z" fill="#98c0dc" /><path d="M12 23L1 18l11-6 11 6z" fill="#e09098" /><g stroke="#3c4c5c" strokeWidth="0.700"><path d="M12 3l7 4-7 4-7-4z" fill="#a8bccc" /><path d="M5 7l7 4v10l-7-4z" fill="#dce8f0" /><path d="M19 7l-7 4v10l7-4z" fill="#6c8498" /></g></> },
];

function ToolBar({ tools, className }: { tools: Tool[]; className: string }) {
	return (
		<div className={clsx('h-full shrink-0 flex items-center bg-linear-to-b from-[#cdd0d5] via-[#bcc0c7] to-[#8f959f] pt-px pl-[3px]', className)}>
			<span className="w-0 h-6 border-l-2 border-dotted border-[#f4f4f4] mr-[3px]" />
			<div className="flex-1 flex items-center justify-between">
				{tools.map((tool) =>
					tool.sep ? (
						<span key={tool.name} className="w-[5px] flex justify-center">
							<span className="w-[2px] h-[22px] bg-[#eceef0] border-l border-[#8a9098]" />
						</span>
					) : (
						<button
							key={tool.name}
							type="button"
							aria-label={tool.name}
							className={clsx(
								'h-[34px] flex items-center',
								tool.more ? 'w-[50px] pl-[6px] gap-[9px]' : 'w-[34px] justify-center',
								tool.active && 'bg-[linear-gradient(#fcdcb4_0,#fcc880_38%,#ffb04c_42%,#ffe890_100%)] border border-[#e0c890]'
							)}
						>
							<svg className="w-6 h-6 shrink-0 overflow-visible" viewBox="0 0 24 24" fill="none">{tool.icon}</svg>
							{tool.more && <Caret className="w-[8px] h-[5px] text-[#555]" />}
						</button>
					)
				)}
			</div>
		</div>
	);
}

function Overflow() {
	return (
		<button type="button" aria-label="Параметры панели" className="h-full w-[15px] shrink-0 bg-linear-to-b from-[#868c98] to-[#484e5a] flex flex-col items-center justify-end gap-[2px] pb-[3px]">
			<span className="w-2 h-[2px] bg-[#d4d4d4]" />
			<Caret className="w-[7px] h-[4px] text-white" />
		</button>
	);
}

/* ---------- status bar ---------- */

function StatusButton({ name, active, children }: { name: string; active?: boolean; children: ReactNode }) {
	return (
		<button type="button" aria-label={name} className={clsx('w-[17px] h-4 shrink-0 flex items-center justify-center', active ? 'bg-linear-to-b from-[#fcc070] to-[#ffe090]' : 'bg-[#c6cccf]')}>
			<svg className="w-[13px] h-[13px]" viewBox="0 0 13 13" fill="none">{children}</svg>
		</button>
	);
}

function Combo({ label, value, width }: { label: string; value: string; width: string }) {
	return (
		<div className={clsx('h-4 shrink-0 flex items-center bg-[#e8e8e8] border border-[#c8c8c8] pr-[2px]', width)}>
			<select aria-label={label} className="flex-1 min-w-0 h-full pl-[2px] appearance-none bg-transparent text-[9px] leading-3 text-black" defaultValue={value}>
				<option value={value}>{value}</option>
			</select>
			<Caret className={SMALL_CARET} />
		</div>
	);
}

const Bar = () => <span className="w-[2px] h-4 bg-[#444] shrink-0 mx-[2px]" />;
const Loop = () => <path d="M3 3c3-2 7-1 7 3s-4 5-7 3M3 1v3h3M5 6l3 2" stroke="#8f9598" strokeWidth="2" />;
const Up = () => <path d="M1 10l3-5h5l3 5z" fill="#8e9496" />;
const Down = () => <path d="M1 3h11L8 10H5z" fill="#8e9496" />;

function StatusBar() {
	return (
		<footer className="h-[20px] shrink-0 flex bg-[#303030]">
			<div className="h-[7px] w-[1113px] shrink-0 bg-[#3b404c]" />
			<div className="flex-1 flex items-center pt-px pl-[6px] bg-linear-to-b from-[#9a9a9a] via-[#b8b8b8] to-[#808080] border-l border-t border-[#555] text-[9px] text-[#1a1a1a]">
				<StatusButton name="Обновить" active><path d="M2 4c3-4 9-2 9 2s-4 6-8 4" stroke="#2a8a3a" strokeWidth="2.500" /><path d="M2 11l6-6 2 2-6 5z" fill="#f0b020" /></StatusButton>
				<span className="flex gap-px mx-px">
					<StatusButton name="Петля 1"><Loop /></StatusButton>
					<StatusButton name="Петля 2"><Loop /></StatusButton>
					<StatusButton name="Петля 3"><Loop /></StatusButton>
				</span>
				<Combo label="История" value="" width="w-[90px]" />
				<Bar />
				<StatusButton name="Предыдущее"><Up /></StatusButton>
				<StatusButton name="Следующее"><Down /></StatusButton>
				<Combo label="Загружение" value="1. Загружение 1" width="w-[105px]" />
				<span className="w-[5px]" />
				<StatusButton name="Схема" active><path d="M1 2v9M1 7h5l5 2M5 3v6M10 2v5" stroke="#333" strokeWidth="1.500" /></StatusButton>
				<span className="flex gap-[2px] ml-[2px]">
					<StatusButton name="Форма"><path d="M2 7c0 5 5 5 6 1s5-5 3-6-6 0-5 3" stroke="#8f9598" strokeWidth="1.500" /></StatusButton>
					<StatusButton name="Анимация"><circle cx="7" cy="2.500" r="1.500" fill="#999" /><path d="M3 6h7M7 4L6 8l3 4M6 8l-3 4" stroke="#888" strokeWidth="1.500" /></StatusButton>
					<StatusButton name="Выше"><Up /></StatusButton>
					<StatusButton name="Ниже"><Down /></StatusButton>
				</span>
				<span className="w-[2px]" />
				<Combo label="Форма колебаний" value="" width="w-[42px]" />
				<span className="w-[2px]" />
				<Combo label="Слой" value="Средний" width="w-[43px]" />
				<span className="w-[5px]" />
				<StatusButton name="Проверка"><path d="M2 7l3 4 6-9" stroke="#888f92" strokeWidth="2" /></StatusButton>
				<StatusButton name="Номера" active><path d="M1 11V2l4 7V2" stroke="#a0503c" strokeWidth="1.500" /><path d="M5 8l2 4 5-10" stroke="#388a38" strokeWidth="2" /></StatusButton>
				<Bar />
				<StatusButton name="Конструирование"><path d="M2 12l6-8" stroke="#e0a020" strokeWidth="2" /><path d="M5 2l6 3" stroke="#68808c" strokeWidth="3" /></StatusButton>
				<Combo label="Вариант" value="1." width="w-[44px]" />
				<Bar />
				<span className="w-[101px] pl-[4px]">Уз.: 0 / 740</span>
				<Bar />
				<span className="w-[99px] pl-[2px]">Эл.: 0 / 400</span>
				<Bar />
				<span className="pl-[2px]">Загр.: 1 / 1</span>
			</div>
		</footer>
	);
}

export default function App() {
	return (
		<div className="relative h-screen flex flex-col overflow-hidden bg-[#505050] font-['Roboto','Noto_Sans',sans-serif] text-[#111]">
			<TitleBar />
			<MenuBar />
			<Ribbon />
			<Orb />
			<div className="h-[3px] shrink-0 bg-[#484848]" />
			<main className="flex-1 min-h-0 flex flex-col">
				{VIEWS.map((view) => (
					<Viewport key={view.title} view={view} />
				))}
			</main>
			<div className="h-[37px] shrink-0 flex border-b border-[#3b404c]">
				<ToolBar tools={TOOLS_SELECT} className="w-[1060px]" />
				<Overflow />
				<ToolBar tools={TOOLS_AXES} className="w-[354px]" />
				<Overflow />
				<ToolBar tools={TOOLS_VIEW} className="w-[320px]" />
				<Overflow />
			</div>
			<StatusBar />
		</div>
	);
}
